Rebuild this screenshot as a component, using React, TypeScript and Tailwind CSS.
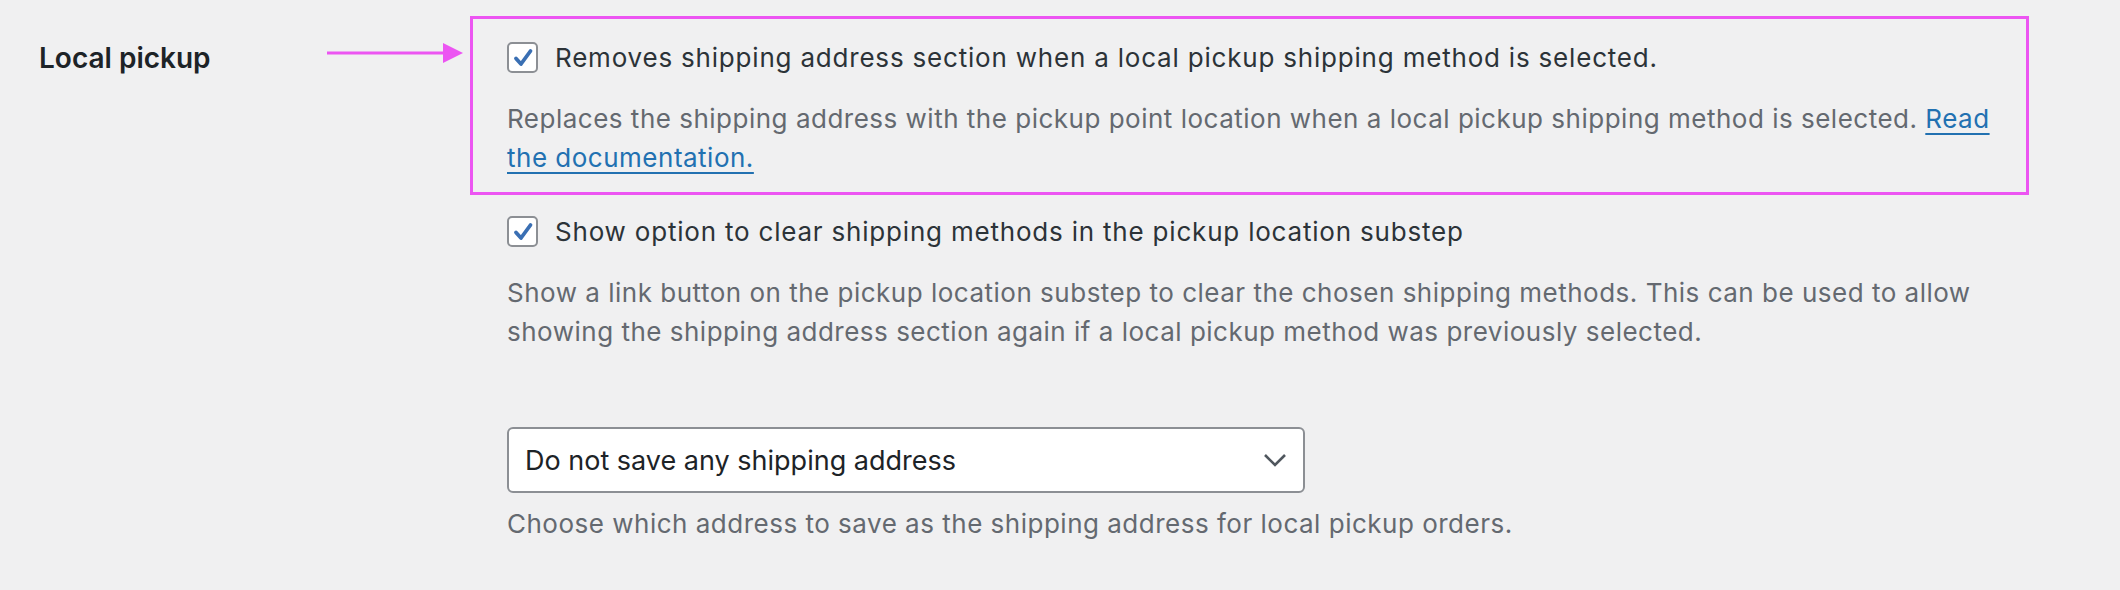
import React from 'react';

const font = { fontFamily: 'Inter, "Liberation Sans", sans-serif' };

const CheckBox = () => (
  <span className="flex h-[31px] w-[31px] shrink-0 items-center justify-center rounded-[5px] border-2 border-[#8c8f94] bg-white">
    <svg width="22" height="22" viewBox="0 0 22 22">
      <path d="M4 11.5 L9 17 L18.5 4" fill="none" stroke="#3a6fb3" strokeWidth="3.8" strokeLinecap="round" strokeLinejoin="round" />
    </svg>
  </span>
);

const Arrow = () => (
  <svg width="137" height="24" viewBox="0 0 137 24" className="shrink-0">
    <line x1="0" y1="12" x2="118" y2="12" stroke="#ec55f2" strokeWidth="3" />
    <polygon points="116,2 136,12 116,22" fill="#ec55f2" />
  </svg>
);

export default function App() {
  return (
    <div className="min-h-[590px] w-[2120px] bg-[#f0f0f1] text-[26px] leading-[39px] text-[#2c3338]" style={font}>
      <div className="flex pt-4">
        <div className="flex w-[470px] shrink-0 items-start pt-[22px]">
          <div className="w-[327px] shrink-0 pl-[39px] text-[28px] font-semibold leading-[40px] text-[#1d2327]">Local pickup</div>
          <div className="pt-[3px]">
            <Arrow />
          </div>
        </div>

        <div className="flex flex-col">
          {/* highlighted option */}
          <div className="w-[1559px] border-[3px] border-[#ec55f2] pb-[15px] pl-[34px] pr-[20px] pt-[19px]">
            <label className="flex items-center gap-[17px]">
              <CheckBox />
              <span className="tracking-[0.8px]">Removes shipping address section when a local pickup shipping method is selected.</span>
            </label>
            <p className="mt-[22px] w-[1505px] tracking-[0.5px] text-[#646970]">
              Replaces the shipping address with the pickup point location when a local pickup shipping method is selected.{' '}
              <a href="#" className="text-[#2271b1] underline decoration-[2px] underline-offset-[5px]">
                Read the documentation.
              </a>
            </p>
          </div>

          <div className="pl-[37px] pt-[17px]">
            <label className="flex items-center gap-[17px]">
              <CheckBox />
              <span className="tracking-[0.8px]">Show option to clear shipping methods in the pickup location substep</span>
            </label>
            <p className="mt-[22px] w-[1505px] tracking-[0.5px] text-[#646970]">
              Show a link button on the pickup location substep to clear the chosen shipping methods. This can be used to allow
              showing the shipping address section again if a local pickup method was previously selected.
            </p>

            <div className="mt-[76px] flex h-[66px] w-[798px] items-center justify-between rounded-[6px] border-2 border-[#8c8f94] bg-white pl-[16px] pr-[16px]">
              <span className="text-[27px] text-[#1d2327]">Do not save any shipping address</span>
              <svg width="24" height="14" viewBox="0 0 24 14">
                <path d="M2 2 L12 12 L22 2" fill="none" stroke="#50575e" strokeWidth="2.6" />
              </svg>
            </div>
            <p className="mt-[11px] tracking-[0.5px] text-[#646970]">Choose which address to save as the shipping address for local pickup orders.</p>
          </div>
        </div>
      </div>
    </div>
  );
}
